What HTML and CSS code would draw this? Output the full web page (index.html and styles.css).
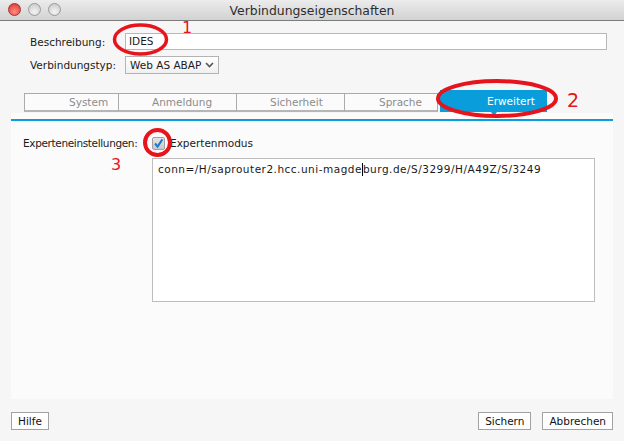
FILE: index.html
```html
<!DOCTYPE html>
<html>
	<head>
		<meta charset="UTF-8">
		<title>Verbindungseigenschaften</title>
		<link rel="stylesheet" href="styles.css">
	</head>

	<body>
		<div id="win">
			<!--Titelleiste-->
			<div class="titlebar">
				<div class="lights">
					<i class="light red"></i>
					<i class="light"></i>
					<i class="light"></i>
				</div>
				<div class="title">Verbindungseigenschaften</div>
			</div>

			<!--Kopfdaten-->
			<div class="form">
				<div class="row">
					<label>Beschreibung:</label>
					<div class="input">IDES</div>
				</div>
				<div class="row">
					<label>Verbindungstyp:</label>
					<div class="select">
						Web AS ABAP
						<svg width="9" height="6" viewBox="0 0 9 6"><path d="M1 1 L4.5 4.5 L8 1" fill="none" stroke="#555" stroke-width="1.6"/></svg>
					</div>
				</div>
			</div>

			<!--Reiter-->
			<div class="tabs">
				<span class="tab system">System</span>
				<span class="tab login">Anmeldung</span>
				<span class="tab secure">Sicherheit</span>
				<span class="tab lang">Sprache</span>
				<span class="tab active">Erweitert</span>
			</div>

			<!--Inhalt-->
			<div class="panel">
				<div class="rule"></div>
				<div class="expert">
					<span class="expert-label">Experteneinstellungen:</span>
					<span class="check">
						<span class="box">
							<svg width="11" height="11" viewBox="0 0 11 11"><path d="M2 5.5 L4.6 8.6 L9.4 1.4" fill="none" stroke="#1a78d0" stroke-width="2"/></svg>
						</span>
						Expertenmodus
					</span>
					<div class="area">conn=/H/saprouter2.hcc.uni-magde<span class="caret"></span>burg.de/S/3299/H/A49Z/S/3249</div>
				</div>
			</div>

			<!--Knöpfe-->
			<div class="footer">
				<button class="btn">Hilfe</button>
				<div class="right">
					<button class="btn">Sichern</button>
					<button class="btn">Abbrechen</button>
				</div>
			</div>

			<!--rote Markierungen-->
			<svg class="marks" width="624" height="441" viewBox="0 0 624 441">
				<ellipse cx="140.5" cy="39.5" rx="26" ry="14.5" fill="none" stroke="#e6141c" stroke-width="3.5"/>
				<text x="182" y="33" class="num">1</text>
				<ellipse cx="497" cy="98.5" rx="59" ry="17.5" fill="none" stroke="#e6141c" stroke-width="4"/>
				<text x="567" y="107" class="num big">2</text>
				<circle cx="157.5" cy="142.5" r="12.5" fill="none" stroke="#e6141c" stroke-width="4"/>
				<text x="111" y="170" class="num">3</text>
			</svg>
		</div>
	</body>
</html>
```

FILE: styles.css
```css
*{
	margin: 0;
	padding: 0;
	box-sizing: border-box;
}
body{
	background: #f6f6f6;
	font-family: "DejaVu Sans", "Liberation Sans", sans-serif;
	font-size: 10.5px;
	color: #1a1a1a;
}
#win{
	width: 624px;
	height: 441px;
	position: relative;
	overflow: hidden;
}
.titlebar{
	height: 21px;
	background: linear-gradient(#ececec, #d2d2d2);
	border-bottom: 1px solid #7d7d7d;
	position: relative;
	display: flex;
	align-items: center;
	justify-content: center;
}
.titlebar .lights{
	position: absolute;
	left: 8px;
	top: 3px;
	display: flex;
	gap: 7px;
}
.titlebar .light{
	display: block;
	width: 13px;
	height: 13px;
	border-radius: 50%;
	background: radial-gradient(circle at 50% 70%, #f4f4f4, #c4c4c4);
	border: 1px solid #9a9a9a;
}
.titlebar .light.red{
	background: radial-gradient(circle at 50% 70%, #ff8c84, #d8332d);
	border-color: #a3302b;
}
.titlebar .title{
	font-size: 12.4px;
	color: #2e2e2e;
}
.form{
	padding: 12px 0 0 30px;
	display: flex;
	flex-direction: column;
	gap: 6px;
}
.form .row{
	display: flex;
	align-items: center;
}
.form label{
	width: 95px;
}
.form .input{
	width: 482px;
	height: 17px;
	background: #fff;
	border: 1px solid #b8b8b8;
	padding: 0 3px;
	line-height: 15px;
}
.form .select{
	width: 94px;
	height: 18px;
	border: 1px solid #b3b3b3;
	background: linear-gradient(#ffffff, #f0f0f0);
	padding: 0 4px;
	display: flex;
	align-items: center;
	justify-content: space-between;
}
.tabs{
	margin: 16px 0 0 24px;
	height: 22px;
	display: flex;
	align-items: flex-end;
}
.tab{
	height: 19px;
	line-height: 16px;
	background: #fbfbfb;
	border-top: 1px solid #ababab;
	border-right: 1px solid #ababab;
	border-bottom: 2px solid #b6b6b6;
	color: #8c8c8c;
}
.tab.system{
	width: 95px;
	padding-left: 44px;
	border-left: 1px solid #ababab;
}
.tab.login{
	width: 118px;
	padding-left: 33px;
}
.tab.secure{
	width: 108px;
	padding-left: 33px;
}
.tab.lang{
	width: 93px;
	padding-left: 34px;
}
.tab.active{
	width: 107px;
	height: 22px;
	line-height: 22px;
	margin-left: 2px;
	padding-left: 47px;
	border: none;
	background: #0a9ddc;
	color: #fff;
	position: relative;
}
.tab.active::after{
	content: "";
	position: absolute;
	left: 51px;
	bottom: -4px;
	border-left: 3px solid transparent;
	border-right: 3px solid transparent;
	border-top: 4px solid #0a9ddc;
}
.panel{
	margin: 1px 11px 0 11px;
	height: 286px;
	background: #fbfbfb;
}
.panel .rule{
	height: 8px;
	border-bottom: 2px solid #0a9ddc;
}
.expert{
	display: grid;
	grid-template-columns: 129px 443px;
	row-gap: 8px;
	padding: 16px 0 0 12px;
}
.expert-label{
	line-height: 13px;
	letter-spacing: -0.35px;
}
.check{
	display: flex;
	align-items: center;
	gap: 5px;
	line-height: 13px;
}
.check .box{
	width: 13px;
	height: 13px;
	border: 1px solid #a0a0a0;
	border-radius: 2px;
	background: linear-gradient(#e4e4e4, #c9c9c9);
	display: flex;
	align-items: center;
	justify-content: center;
}
.area{
	grid-column: 2;
	height: 144px;
	background: #fff;
	border: 1px solid #bdbdbd;
	padding: 3px 5px;
	line-height: 14px;
	letter-spacing: 0.5px;
}
.area .caret{
	display: inline-block;
	width: 1px;
	height: 13px;
	background: #000;
	vertical-align: -3px;
}
.footer{
	margin-top: 13px;
	padding: 0 11px;
	display: flex;
	justify-content: space-between;
}
.footer .right{
	display: flex;
	gap: 11px;
}
.btn{
	height: 18px;
	padding: 0 6px;
	border: 1px solid #a2a2a2;
	background: #fff;
	font-family: inherit;
	font-size: 10.5px;
	color: #111;
}
.marks{
	position: absolute;
	left: 0;
	top: 0;
	pointer-events: none;
}
.marks .num{
	font-family: "DejaVu Sans", sans-serif;
	font-size: 16px;
	fill: #e6141c;
}
.marks .big{
	font-size: 19px;
}
```
